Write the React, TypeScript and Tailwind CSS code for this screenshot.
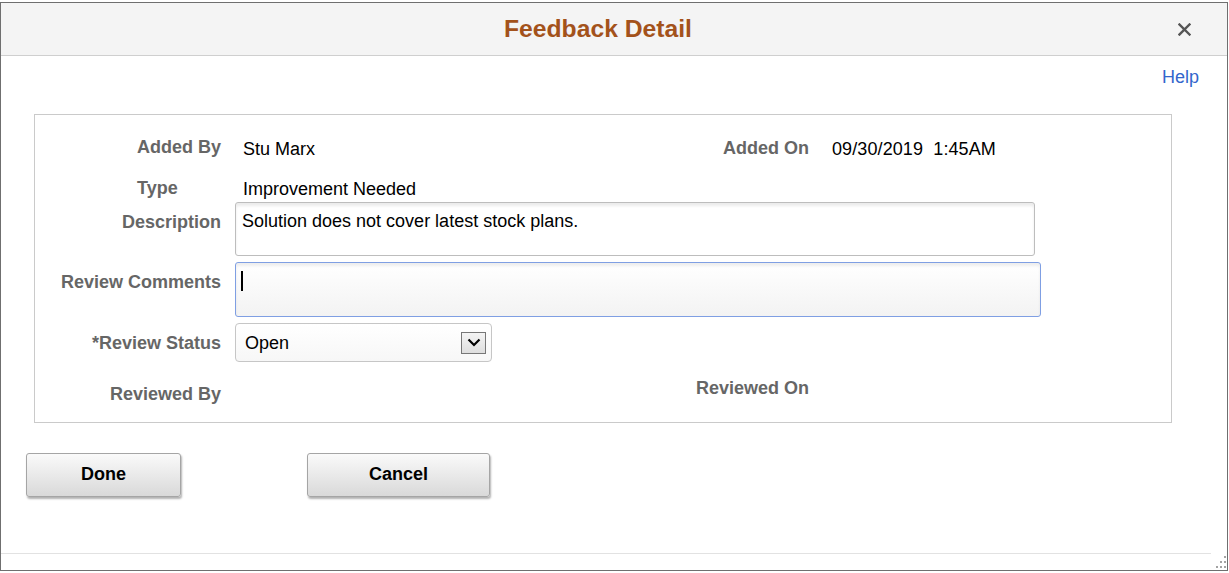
import React from 'react'

const label = 'font-bold text-[#666666]'

export default function App() {
  return (
    <div className="w-[1229px] h-[573px] bg-white pt-[2px] text-[18px] leading-[22px] font-['Liberation_Sans',Arial,sans-serif]">
      <div className="relative w-[1228px] h-[569px] border border-[#6f6f6f] flex flex-col">
        {/* header */}
        <div className="h-[53px] bg-[#f4f4f4] border-b border-[#cfcfcf] flex items-center">
          <div className="ml-[503px] text-[24.7px] leading-[30px] font-bold text-[#a3521b]">Feedback Detail</div>
          <button className="ml-auto mr-[36px] w-[13px] h-[13px]" aria-label="Close">
            <svg width="13" height="13" viewBox="0 0 13 13">
              <path d="M1.5 1.5 L11.5 11.5 M11.5 1.5 L1.5 11.5" stroke="#555" strokeWidth="2.4" strokeLinecap="square" />
            </svg>
          </button>
        </div>

        <div className="flex justify-end pr-[28px] mt-[10px]">
          <a className="text-[#3366cc]">Help</a>
        </div>

        {/* detail box */}
        <div className="ml-[33px] mt-[26px] w-[1138px] h-[309px] border border-[#cacaca]">
          <div className="flex h-[22px] mt-[23px] items-center">
            <div className="w-[587px] flex">
              <div className={`w-[186px] text-right -mt-[2px] ${label}`}>Added By</div>
              <div className="pl-[22px] text-black">Stu Marx</div>
            </div>
            <div className={`w-[187px] text-right -mt-[2px] ${label}`}>Added On</div>
            <div className="ml-[23px] whitespace-pre text-black tracking-[0.1px]">09/30/2019  1:45AM</div>
          </div>

          <div className="flex h-[22px] mt-[18px] items-center">
            <div className={`w-[186px] pl-[102px] -mt-[2px] ${label}`}>Type</div>
            <div className="pl-[22px] text-black">Improvement Needed</div>
          </div>

          <div className="flex items-start mt-[2px]">
            <div className={`w-[186px] text-right pt-[9px] ${label}`}>Description</div>
            <div className="ml-[14px] w-[800px] h-[54px] border border-[#bdbdbd] rounded-[3px] pl-[6px] pt-[7px] text-black shadow-[inset_0_3px_3px_rgba(0,0,0,0.08)]">
              Solution does not cover latest stock plans.
            </div>
          </div>

          <div className="flex items-start mt-[6px]">
            <div className={`w-[186px] text-right pt-[9px] ${label}`}>Review Comments</div>
            <div className="ml-[14px] w-[806px] h-[55px] border border-[#7f9fe3] rounded-[3px] pl-[5px] pt-[8px] bg-gradient-to-b from-white to-[#f3f3f3] shadow-[inset_0_3px_3px_rgba(0,0,0,0.07)]">
              <div className="w-[2px] h-[20px] bg-black" />
            </div>
          </div>

          <div className="flex items-center mt-[6px] h-[39px]">
            <div className={`w-[186px] text-right ${label}`}>*Review Status</div>
            <div className="ml-[14px] w-[257px] h-[39px] border border-[#c6c6c6] rounded-[4px] flex items-center pl-[9px] bg-gradient-to-b from-white to-[#f7f7f7]">
              <span className="text-black">Open</span>
              <div className="ml-auto mr-[5px] w-[25px] h-[22px] border border-[#777] bg-gradient-to-b from-[#f4f4f4] to-[#dedede] flex items-center justify-center">
                <svg width="14" height="9" viewBox="0 0 14 9">
                  <path d="M1.5 1.5 L7 7 L12.5 1.5" fill="none" stroke="#000" strokeWidth="2.2" />
                </svg>
              </div>
            </div>
          </div>

          <div className="flex items-start mt-[15px]">
            <div className="w-[587px]">
              <div className={`w-[186px] text-right pt-[6px] ${label}`}>Reviewed By</div>
            </div>
            <div className={`w-[187px] text-right ${label}`}>Reviewed On</div>
          </div>
        </div>

        {/* buttons */}
        <div className="flex mt-[30px] ml-[25px]">
          <button className="w-[155px] h-[44px] pb-[2px] border border-[#a5a5a5] rounded-[3px] bg-gradient-to-b from-[#fafafa] to-[#d9d9d9] shadow-[1px_2px_2px_rgba(0,0,0,0.3)] font-bold text-black">
            Done
          </button>
          <button className="ml-[126px] w-[183px] h-[44px] pb-[2px] border border-[#a5a5a5] rounded-[3px] bg-gradient-to-b from-[#fafafa] to-[#d9d9d9] shadow-[1px_2px_2px_rgba(0,0,0,0.3)] font-bold text-black">
            Cancel
          </button>
        </div>

        <div className="mt-auto h-[17px] mr-[16px] border-t border-[#e2e2e2]" />
        <svg className="absolute right-[1px] bottom-[2px]" width="10" height="12" viewBox="0 0 10 12">
          <rect x="8" y="0" width="2" height="2" fill="#a3a3a3" />
          <rect x="4" y="5" width="2" height="2" fill="#a3a3a3" />
          <rect x="8" y="5" width="2" height="2" fill="#a3a3a3" />
          <rect x="0" y="10" width="2" height="2" fill="#a3a3a3" />
          <rect x="4" y="10" width="2" height="2" fill="#a3a3a3" />
          <rect x="8" y="10" width="2" height="2" fill="#a3a3a3" />
        </svg>
      </div>
    </div>
  )
}
